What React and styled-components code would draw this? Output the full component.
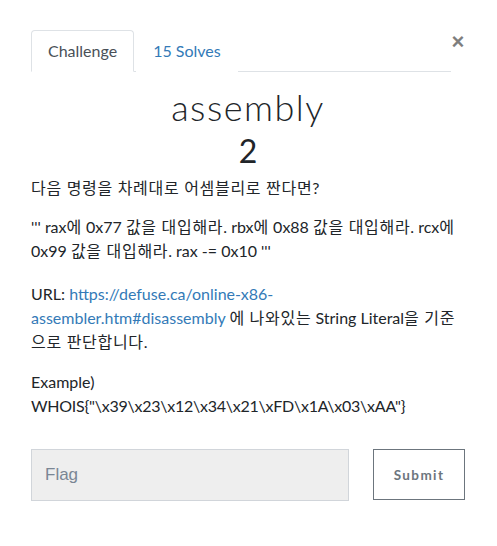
import React from "react";
import styled, { createGlobalStyle } from "styled-components";

const Global = createGlobalStyle`
  html, body { margin: 0; padding: 0; background: #fff; }
  body { font-family: Lato, "Noto Sans CJK KR", sans-serif; color: #212529; }
`;

const Modal = styled.div`
  width: 434px;
  padding: 30px 32px 40px 31px;
`;

const Header = styled.div`
  display: flex;
  align-items: flex-start;
`;

const Tabs = styled.ul`
  flex: 1;
  display: flex;
  list-style: none;
  margin: 0;
  padding: 0;
  border-bottom: 1px solid #dee2e6;
`;

const Tab = styled.li`
  margin-bottom: -1px;
  margin-left: ${(p) => (p.$first ? "0" : "2px")};
  padding: 8px 16px;
  font-size: 16px;
  line-height: 24px;
  border: 1px solid ${(p) => (p.$active ? "#dee2e6" : "transparent")};
  border-bottom-color: ${(p) => (p.$active ? "#fff" : "transparent")};
  border-radius: 4px 4px 0 0;
  background: #fff;
  color: ${(p) => (p.$active ? "#495057" : "#337ab7")};
  cursor: pointer;
`;

const Close = styled.button`
  width: 14px;
  padding: 0;
  margin: 1px 0 0;
  border: 0;
  background: none;
  font-family: "Liberation Sans", Arial, sans-serif;
  font-size: 22px;
  font-weight: 700;
  line-height: 22px;
  color: #000;
  opacity: 0.5;
  text-align: center;
  cursor: pointer;
`;

const Title = styled.h3`
  margin: 14px 0 0;
  text-align: center;
  font-family: Lato, sans-serif;
  font-weight: 300;
  font-size: 36px;
  letter-spacing: 1.5px;
  line-height: 43px;
  color: #212529;
`;

const Value = styled.h4`
  margin: 0 0 4px;
  text-align: center;
  font-family: Lato, sans-serif;
  font-weight: 400;
  font-size: 32px;
  line-height: 43px;
  color: #212529;
`;

const Para = styled.p`
  margin: 0 0 ${(p) => p.$mb ?? 16}px;
  font-size: 16px;
  line-height: 24px;
  color: #212529;
`;

/* Hangul runs: the reference's Korean face sets its glyphs a little looser */
const Ko = styled.span`
  letter-spacing: 0.7px;
`;

const Code = styled.span`
  letter-spacing: -0.25px;
`;

const Link = styled.a`
  color: #337ab7;
  text-decoration: none;
`;

const Form = styled.form`
  display: grid;
  grid-template-columns: 318px 92px;
  column-gap: 24px;
  margin-top: 31px;
  align-items: start;
`;

const Input = styled.input`
  box-sizing: border-box;
  height: 52px;
  padding: 0 13px;
  background: #eeeeee;
  border: 1px solid #d1d5da;
  border-radius: 0;
  font-family: "Liberation Sans", Arial, sans-serif;
  font-size: 17px;
  color: #495057;
  outline: none;
  &::placeholder { color: #7a8694; }
`;

const Submit = styled.button`
  box-sizing: border-box;
  height: 51px;
  background: #fff;
  border: 1px solid #6c757d;
  border-radius: 0;
  font-family: Lato, sans-serif;
  font-weight: 700;
  font-size: 13.5px;
  letter-spacing: 1.4px;
  color: #6c757d;
  cursor: pointer;
`;

export default function App() {
  return (
    <>
      <Global />
      <Modal>
        <Header>
          <Tabs>
            <Tab $first $active>Challenge</Tab>
            <Tab>15 Solves</Tab>
          </Tabs>
          <Close aria-label="Close">×</Close>
        </Header>
        <Title>assembly</Title>
        <Value>2</Value>
        <Para $mb={15}>
          <Ko>다음 명령을 차례대로 어셈블리로 짠다면?</Ko>
        </Para>
        <Para $mb={19}>
          ''' rax<Ko>에</Ko> 0x77 <Ko>값을 대입해라</Ko>. rbx<Ko>에</Ko> 0x88 <Ko>값을 대입해라</Ko>. rcx<Ko>에</Ko>{" "}
          0x99 <Ko>값을 대입해라</Ko>. rax -= 0x10 '''
        </Para>
        <Para>
          URL:{" "}
          <Link href="#">https://defuse.ca/online-x86-assembler.htm#disassembly</Link>{" "}
          <Ko>에 나와있는</Ko> String Literal<Ko>을 기준으로 판단합니다</Ko>.
        </Para>
        <Para $mb={0}>
          Example)
          <br />
          <Code>WHOIS{"{"}"\x39\x23\x12\x34\x21\xFD\x1A\x03\xAA"{"}"}</Code>
        </Para>
        <Form onSubmit={(e) => e.preventDefault()}>
          <Input placeholder="Flag" />
          <Submit type="submit">Submit</Submit>
        </Form>
      </Modal>
    </>
  );
}
